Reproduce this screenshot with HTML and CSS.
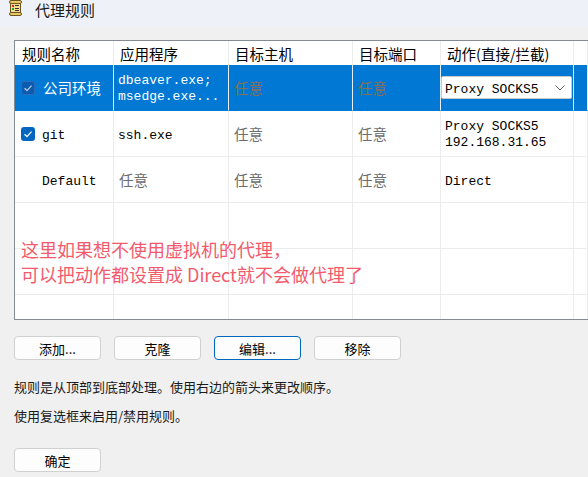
FILE: index.html
```html
<!DOCTYPE html>
<html lang="zh-CN">
<head>
    <meta charset="UTF-8">
    <title>代理规则</title>
    <link rel="stylesheet" href="styles.css">
</head>
<body>
    <div class="titlebar">
        <svg class="app-icon" width="15" height="16" viewBox="0 0 15 16">
            <rect x="2.5" y="2.5" width="10" height="12" fill="#f3dc8e" stroke="#6b5420"/>
            <rect x="1.5" y="0.5" width="12" height="3" rx="1.5" fill="#e9c766" stroke="#6b5420"/>
            <rect x="1.5" y="12.5" width="12" height="3" rx="1.5" fill="#e9c766" stroke="#6b5420"/>
            <rect x="4" y="5" width="2" height="2" fill="#d62a1e"/>
            <rect x="4" y="8" width="2" height="2" fill="#2aa13b"/>
            <rect x="7" y="5" width="4" height="1" fill="#333"/>
            <rect x="7" y="8" width="4" height="1" fill="#333"/>
            <rect x="7" y="10" width="4" height="1" fill="#333"/>
        </svg>
        <span class="title">代理规则</span>
    </div>

    <div class="content">
        <div class="grid-frame">
            <div class="grid">
                <!-- header -->
                <div class="cell head first">规则名称</div>
                <div class="cell head">应用程序</div>
                <div class="cell head">目标主机</div>
                <div class="cell head">目标端口</div>
                <div class="cell head">动作(直接/拦截)</div>
                <div class="cell head"></div>

                <!-- row 1 (selected) -->
                <div class="cell selected first">
                    <span class="check dim">
                        <svg width="14" height="14" viewBox="0 0 14 14"><polyline points="3.5,7.3 6,9.6 10.5,4.6" fill="none" stroke="#b9c8dc" stroke-width="1.3"/></svg>
                    </span>
                    <span class="name">公司环境</span>
                </div>
                <div class="cell selected mono lines">dbeaver.exe;<br>msedge.exe...</div>
                <div class="cell selected any-dim">任意</div>
                <div class="cell selected any-dim">任意</div>
                <div class="cell selected action">
                    <div class="select">
                        <span class="mono">Proxy SOCKS5</span>
                        <svg width="10" height="6" viewBox="0 0 10 6"><polyline points="0.5,0.5 5,5 9.5,0.5" fill="none" stroke="#606060" stroke-width="1"/></svg>
                    </div>
                </div>
                <div class="cell selected"></div>

                <!-- row 2 -->
                <div class="cell first">
                    <span class="check">
                        <svg width="14" height="14" viewBox="0 0 14 14"><polyline points="3.5,7.3 6,9.6 10.5,4.6" fill="none" stroke="#fff" stroke-width="1.3"/></svg>
                    </span>
                    <span class="mono">git</span>
                </div>
                <div class="cell mono">ssh.exe</div>
                <div class="cell any">任意</div>
                <div class="cell any">任意</div>
                <div class="cell mono lines">Proxy SOCKS5<br>192.168.31.65</div>
                <div class="cell"></div>

                <!-- row 3 -->
                <div class="cell first no-check mono">Default</div>
                <div class="cell any">任意</div>
                <div class="cell any">任意</div>
                <div class="cell any">任意</div>
                <div class="cell mono">Direct</div>
                <div class="cell"></div>

                <!-- empty rows -->
                <div class="cell"></div><div class="cell"></div><div class="cell"></div>
                <div class="cell"></div><div class="cell"></div><div class="cell"></div>
                <div class="cell"></div><div class="cell"></div><div class="cell"></div>
                <div class="cell"></div><div class="cell"></div><div class="cell"></div>
                <div class="cell"></div><div class="cell"></div><div class="cell"></div>
                <div class="cell"></div><div class="cell"></div><div class="cell"></div>
            </div>

            <div class="note">这里如果想不使用虚拟机的代理，<br>可以把动作都设置成 Direct就不会做代理了</div>
        </div>

        <div class="buttons">
            <button class="btn">添加...</button>
            <button class="btn">克隆</button>
            <button class="btn focused">编辑...</button>
            <button class="btn">移除</button>
        </div>

        <p class="hint first-hint">规则是从顶部到底部处理。使用右边的箭头来更改顺序。</p>
        <p class="hint">使用复选框来启用/禁用规则。</p>

        <button class="btn ok">确定</button>
    </div>
</body>
</html>
```

FILE: styles.css
```css
body {
    margin: 0;
    background-color: #f0f0f0;
    font-family: "Noto Sans CJK SC", "Microsoft YaHei", sans-serif;
    font-size: 13px;
    color: #1a1a1a;
    overflow: hidden;
    width: 588px;
    height: 477px;
}

.titlebar {
    height: 27px;
    background-color: #eef2f8;
    display: flex;
    align-items: flex-start;
}

.app-icon {
    margin: 0 0 0 8px;
}

.title {
    margin: 1px 0 0 12px;
    font-size: 15px;
    line-height: 17px;
    color: #1a1a1a;
}

.content {
    padding: 13px 0 0 14px;
}

/* rules list */
.grid-frame {
    position: relative;
    box-sizing: border-box;
    width: 574px;
    height: 280px;
    border: 1px solid #858a93;
    border-right: none;
    background-color: #fff;
    overflow: hidden;
}

.grid {
    display: grid;
    grid-template-columns: 99px 115px 124px 88px 133px 1fr;
    grid-template-rows: 24px repeat(6, 46px);
}

.cell {
    box-sizing: border-box;
    border-right: 1px solid #ececec;
    border-bottom: 1px solid #ececec;
    display: flex;
    align-items: center;
    padding-left: 4px;
    font-size: 14.5px;
    color: #000;
    white-space: nowrap;
    overflow: hidden;
}

.cell.head {
    border-bottom: none;
    padding-left: 6px;
}

.cell.head.first {
    padding-left: 7px;
}

.cell.first {
    padding-left: 6px;
}

.cell.no-check {
    padding-left: 27px;
}

.cell.selected {
    background-color: #0078d4;
    color: #fff;
    border-right-color: #e6eef7;
    border-bottom-color: #0078d4;
}

.mono {
    font-family: "Liberation Mono", "Noto Sans CJK SC", monospace;
    font-size: 13px;
    padding-top: 3px;
}

.lines {
    line-height: 16px;
}

.cell.any {
    color: #6d6d6d;
    padding-left: 5px;
}

.cell.selected.any-dim {
    color: #8a6f55;
    padding-left: 5px;
}

.check {
    width: 14px;
    height: 14px;
    border-radius: 3px;
    background-color: #0067c0;
    display: flex;
    margin-right: 7px;
}

.check.dim {
    background-color: #0b5cb0;
    box-shadow: inset 0 0 0 1px #2a6fbd;
    margin-right: 8px;
}

.action {
    padding-left: 0;
}

.select {
    box-sizing: border-box;
    width: 131px;
    height: 23px;
    background-color: #fff;
    border: 1px solid #c9c9c9;
    border-radius: 2px;
    display: flex;
    align-items: center;
    justify-content: space-between;
    padding: 0 6px 0 3px;
    color: #000;
}

.note {
    position: absolute;
    left: 6px;
    top: 196px;
    font-size: 18px;
    line-height: 25px;
    color: #f35a6c;
    white-space: nowrap;
}

/* buttons and hints */
.buttons {
    display: flex;
    gap: 13px;
    margin-top: 16px;
}

.btn {
    box-sizing: border-box;
    width: 87px;
    height: 24px;
    padding: 0;
    background-color: #fdfdfd;
    border: 1px solid #d0d0d0;
    border-radius: 4px;
    font-family: inherit;
    font-size: 13px;
    color: #000;
}

.btn.focused {
    border-color: #0067c0;
}

.hint {
    margin: 9px 0 0;
    line-height: 20px;
}

.first-hint {
    margin-top: 17px;
}

.btn.ok {
    margin-top: 22px;
}
```
